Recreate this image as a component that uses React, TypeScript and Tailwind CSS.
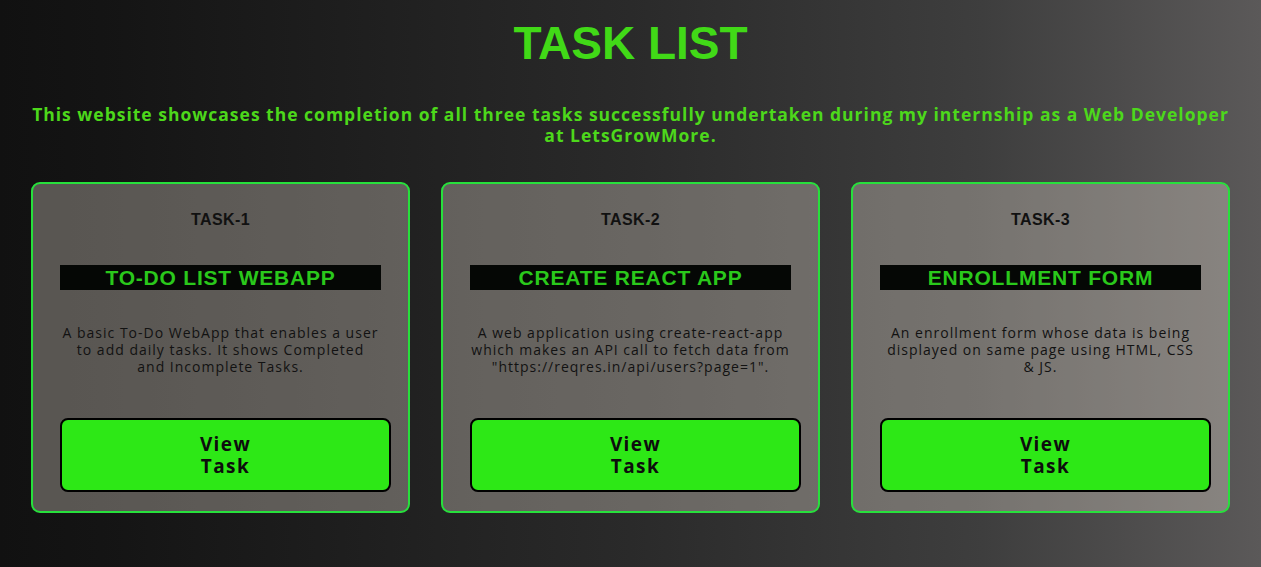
const tasks = [
  {
    id: "TASK-1",
    title: "TO-DO LIST WEBAPP",
    desc: ["A basic To-Do WebApp that enables a user", "to add daily tasks. It shows Completed", "and Incomplete Tasks."],
  },
  {
    id: "TASK-2",
    title: "CREATE REACT APP",
    desc: ["A web application using create-react-app", "which makes an API call to fetch data from", '"https://reqres.in/api/users?page=1".'],
  },
  {
    id: "TASK-3",
    title: "ENROLLMENT FORM",
    desc: ["An enrollment form whose data is being", "displayed on same page using HTML, CSS", "& JS."],
  },
];

function TaskCard({ id, title, desc }: { id: string; title: string; desc: string[] }) {
  return (
    <div className="flex h-[331px] flex-col rounded-[9px] border-2 border-[#27e03c] bg-[rgba(235,225,212,0.33)] px-[27px] pt-[26px]">
      <h3 className="text-center font-['Liberation_Sans',Arial,sans-serif] text-[16px] font-bold leading-[20px] tracking-[0.4px] text-[#111]">
        {id}
      </h3>
      <div className="mt-[35px] bg-[#050705] text-center font-['Liberation_Sans',Arial,sans-serif] text-[21px] font-bold leading-[25px] tracking-[0.8px] text-[#2ac81b]">
        {title}
      </div>
      <p className="mt-[34px] h-[54px] whitespace-nowrap text-center font-['Open_Sans',sans-serif] text-[14px] font-medium leading-[17px] tracking-[1px] text-[#121212]">
        {desc.map((line) => (
          <span key={line} className="block">
            {line}
          </span>
        ))}
      </p>
      <button
        type="button"
        className="mt-[40px] flex h-[74px] w-[331px] items-center justify-center rounded-[8px] border-2 border-black bg-[#2de816] font-['Open_Sans',sans-serif] text-[19px] font-bold leading-[22px] tracking-[1.4px] text-[#0d0d0d]"
      >
        <span className="w-[60px] text-center">View Task</span>
      </button>
    </div>
  );
}

export default function App() {
  return (
    <div className="min-h-[567px] w-full bg-[linear-gradient(to_right,#111111_0%,#141414_8%,#2a2a2a_50%,#3e3e3e_78%,#5b5959_100%)] px-[31px] pt-[17px] pb-[54px]">
      <h1 className="text-center font-['Liberation_Sans',Arial,sans-serif] text-[46px] font-bold leading-[52px] text-[#41d917]">
        TASK LIST
      </h1>
      <p className="mt-[35px] text-center font-['Open_Sans',sans-serif] text-[17.5px] font-bold leading-[21px] tracking-[1px] text-[#4dd81b]">
        This website showcases the completion of all three tasks successfully undertaken during my internship as a Web Developer at LetsGrowMore.
      </p>
      <div className="mt-[36px] grid grid-cols-3 gap-[31px]">
        {tasks.map((t) => (
          <TaskCard key={t.id} {...t} />
        ))}
      </div>
    </div>
  );
}
